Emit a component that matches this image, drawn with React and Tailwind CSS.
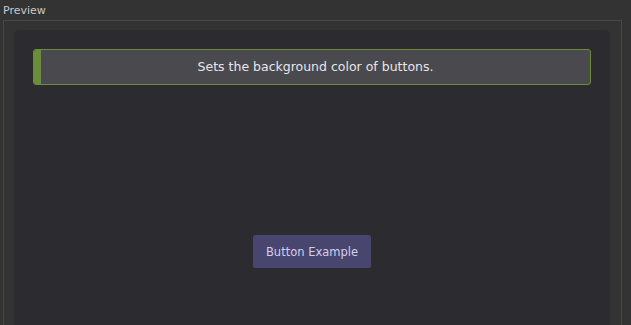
import React from "react"

export default function App() {
  return (
    <div className="w-[631px] h-[325px] overflow-hidden bg-[#333333] font-['DejaVu_Sans',sans-serif]">
      <div className="pl-[3px] pt-[4px] h-[20px] text-[11px] leading-[13px] text-[#c8c8c8]">Preview</div>
      <div className="ml-[3px] w-[619px] h-[400px] border border-[#474747] pt-[9px] pl-[10px] pr-[11px]">
        <div className="h-[400px] bg-[#2c2b30] rounded-[5px] pt-[19px] px-[19px]">
          <div className="flex h-[36px] border border-[#6b8c3b] rounded-[3px] bg-[#4a494e] overflow-hidden">
            <div className="w-[7px] bg-[#6b8c3b]" />
            <div className="flex-1 flex items-center justify-center text-[12.5px] text-[#e6e6ea]">
              Sets the background color of buttons.
            </div>
          </div>
          <div className="flex justify-center pt-[150px]">
            <button className="w-[118px] h-[33px] pt-[2px] rounded-[2px] bg-[#48456f] text-[11.5px] text-[#d2d0e8]">
              Button Example
            </button>
          </div>
        </div>
      </div>
    </div>
  )
}
